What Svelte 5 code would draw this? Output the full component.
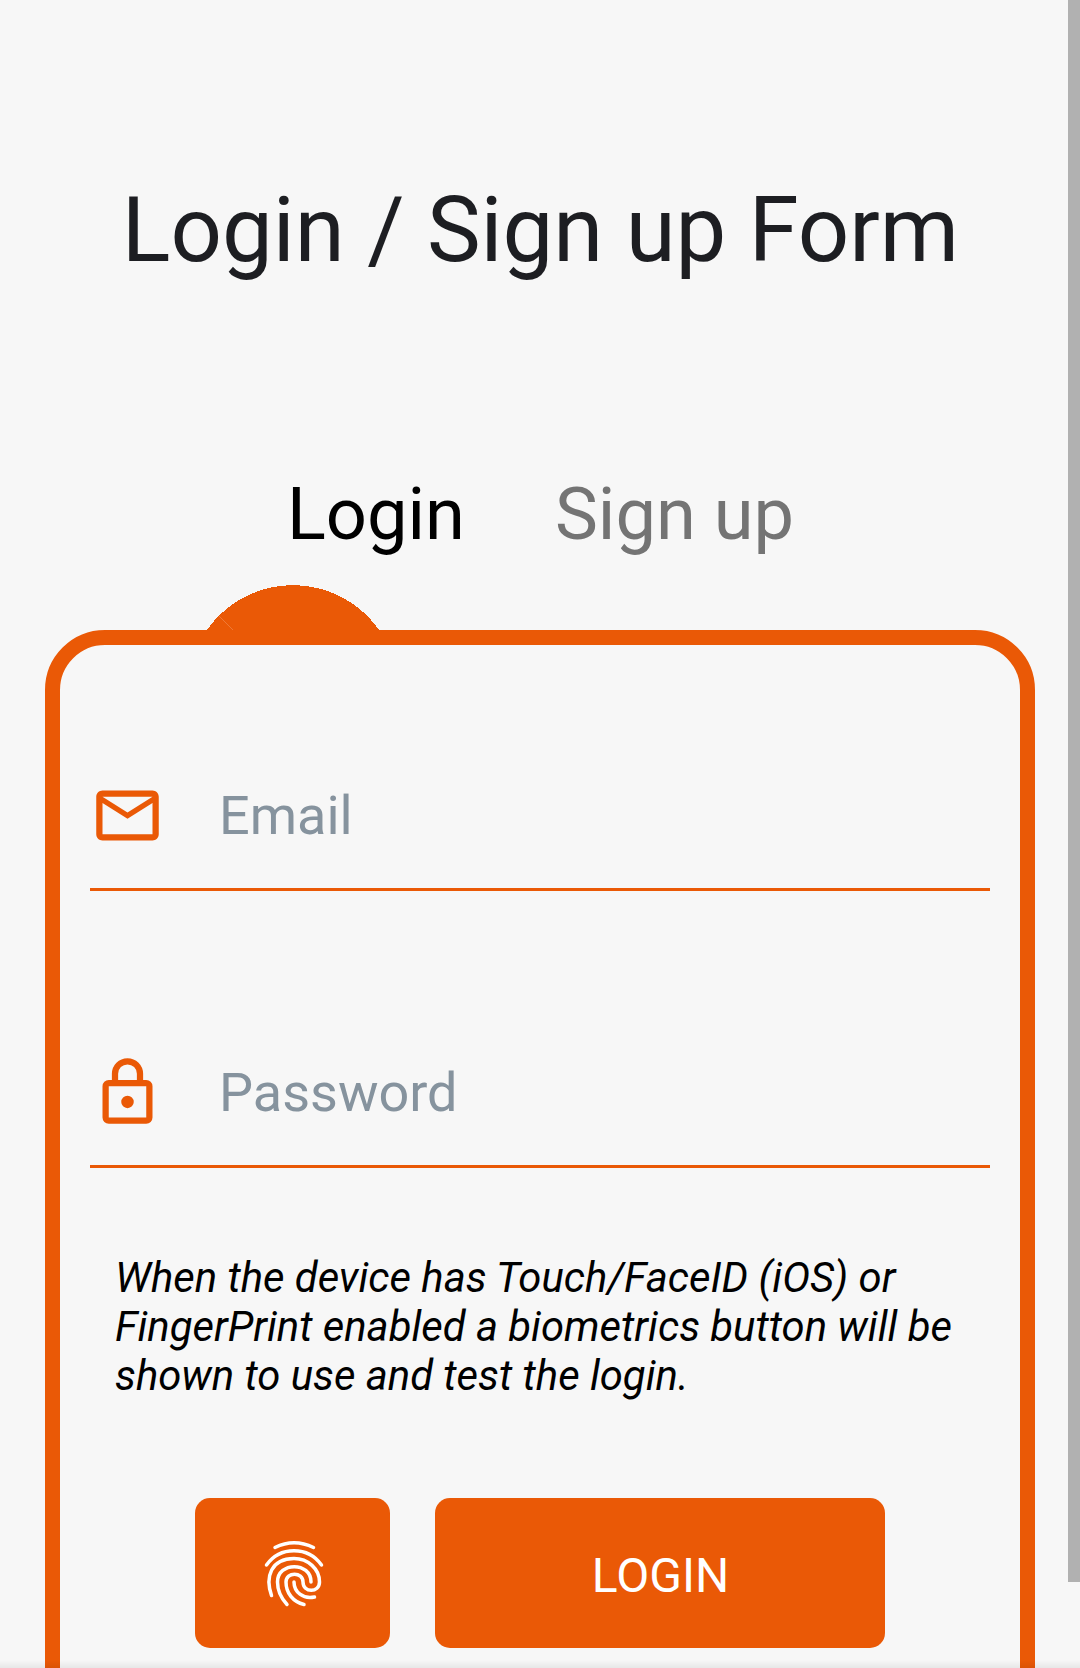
<script>
  const fields = [
    {
      name: 'Email',
      type: 'email',
      icon: 'M22 6c0-1.1-.9-2-2-2H4c-1.1 0-2 .9-2 2v12c0 1.1.9 2 2 2h16c1.1 0 2-.9 2-2V6m-2 0-8 5-8-5h16m0 12H4V8l8 5 8-5v10z'
    },
    {
      name: 'Password',
      type: 'password',
      icon: 'M12 17a2 2 0 0 1-2-2 2 2 0 0 1 2-2 2 2 0 0 1 2 2 2 2 0 0 1-2 2m6 3V10H6v10h12m0-12a2 2 0 0 1 2 2v10a2 2 0 0 1-2 2H6a2 2 0 0 1-2-2V10a2 2 0 0 1 2-2h1V6a5 5 0 0 1 10 0v2h1m-6-5a3 3 0 0 0-3 3v2h6V6a3 3 0 0 0-3-3z'
    }
  ];
</script>

<main class="screen">
  <h1>Login / Sign up Form</h1>
  <nav class="tabs">
    <button class="tab active">Login</button>
    <button class="tab">Sign up</button>
  </nav>

  <section class="panel">
    <svg class="marker" width="180" height="45" viewBox="0 0 180 45" aria-hidden="true">
      <path d="M4 45A105 105 0 0 1 176 45Z" fill="#ea5906" shape-rendering="crispEdges" />
      <path d="M16 31 30 45" stroke="#ef8143" stroke-width=".8" />
    </svg>
    <form class="card">
      {#each fields as field}
        <label class="field">
          <svg class="icon" viewBox="0 0 24 24" aria-hidden="true"><path d={field.icon} /></svg>
          <input type={field.type} placeholder={field.name} />
        </label>
      {/each}
      <p class="hint">When the device has Touch/FaceID (iOS) or FingerPrint enabled a biometrics button will be shown to use and test the login.</p>
      <div class="actions">
        <button class="action finger" type="button" aria-label="Use fingerprint">
          <svg viewBox="0 0 68 74" aria-hidden="true">
            <path d="M15 11.5Q34 2 53.500 11.500" />
            <path d="M6.500 29C20 10 48 10 61.500 29" />
            <path d="M11.500 59.500C5 41 11 22.500 34 22.500C48 22.500 59.500 33 59.500 46C59.500 57 43 57 43 46C43 35.500 26 35.500 26 46C26 57 33 66 44 68.500" />
            <path d="M27 68.500C20 61 17.500 54 17.500 46C17.500 25.500 51 25.500 51 46" />
            <path d="M34 46C34 56 43 63.500 54.500 61" />
          </svg>
        </button>
        <button class="action login" type="button">LOGIN</button>
      </div>
    </form>
  </section>
  <div class="scrollbar"></div>
  <div class="edge"></div>
</main>

<style>
  :global(body) { margin: 0; }
  .screen {
    position: relative;
    box-sizing: border-box;
    height: 1668px;
    overflow: hidden;
    background: #f7f7f7;
    font-family: Roboto, sans-serif;
  }
  h1 {
    margin: 0;
    padding: 176px 0 0 1px;
    font-size: 90.4px;
    line-height: 108px;
    font-weight: 400;
    text-align: center;
    white-space: nowrap;
    color: #1d1e22;
  }
  button, input { font: inherit; border: 0; padding: 0; background: none; }
  .tabs {
    display: flex;
    justify-content: center;
    gap: 90px;
    height: 84px;
    margin-top: 189px;
    padding-left: 1px;
  }
  .tab { font-size: 72.2px; line-height: 84px; color: #747474; white-space: nowrap; }
  .tab.active { color: #000; }
  .panel { padding: 28px 45px 0; }
  .marker { display: block; margin-left: 158px; }
  .card {
    box-sizing: border-box;
    height: 1200px;
    padding: 90px 30px 0;
    border: 15px solid #ea5906;
    border-radius: 60px;
    background: #f7f7f7;
  }
  .field {
    display: flex;
    align-items: center;
    gap: 54px;
    box-sizing: border-box;
    height: 156px;
    padding-top: 7px;
    margin-bottom: 121px;
    border-bottom: 3px solid #ea5906;
  }
  .icon { width: 75px; height: 75px; flex: none; fill: #ea5906; }
  input { flex: 1; min-width: 0; height: 80px; font-size: 54px; outline: 0; }
  input::placeholder { color: #86939e; opacity: 1; }
  .hint {
    margin: -36px 0 0;
    padding: 0 25px;
    font-size: 41.8px;
    line-height: 49px;
    font-style: italic;
    color: #000;
  }
  .actions { display: flex; justify-content: center; gap: 45px; margin-top: 98px; }
  .action {
    display: flex;
    align-items: center;
    justify-content: center;
    box-sizing: border-box;
    height: 150px;
    border-radius: 15px;
    background: #ea5906;
    color: #fff;
    font-size: 48px;
  }
  .finger { width: 195px; }
  .finger svg { width: 68px; height: 74px; margin-left: 2px; fill: none; stroke: #fff; stroke-width: 3.5; stroke-linecap: round; }
  .login { width: 450px; padding: 5px 0 0 1px; }
  .scrollbar { position: absolute; top: 0; right: 0; width: 12px; height: 1582px; background: #b1b1b1; }
  .edge { position: absolute; right: 0; bottom: 0; left: 0; height: 8px; background: linear-gradient(transparent, rgba(0, 0, 0, .065)); }
</style>
